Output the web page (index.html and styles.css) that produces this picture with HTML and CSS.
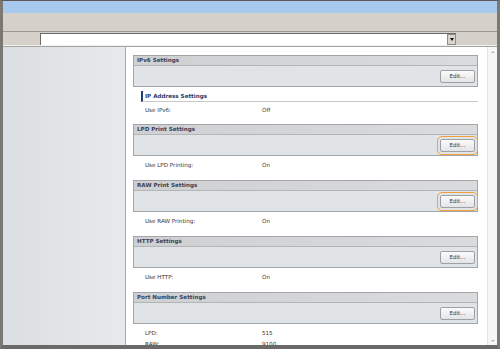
FILE: index.html
```html
<!DOCTYPE html>
<html lang="en">
<head>
<meta charset="UTF-8" />
<title>Remote UI - Network Settings</title>
<link rel="stylesheet" href="styles.css">
</head>
<body>
<div class="window">
  <div class="titlebar"></div>
  <div class="toolbar"></div>
  <div class="addressbar">
    <div class="address"><span class="drop"></span></div>
  </div>
  <div class="main">
    <div class="nav"></div>
    <div class="content">
      <div class="pane">

        <div class="section">
          <div class="section-head">IPv6 Settings</div>
          <div class="section-body"><button class="edit">Edit...</button></div>
        </div>
        <div class="subhead">IP Address Settings</div>
        <div class="row first">
          <span class="label">Use IPv6:</span>
          <span class="value">Off</span>
        </div>

        <div class="section">
          <div class="section-head">LPD Print Settings</div>
          <div class="section-body"><button class="edit focus">Edit...</button></div>
        </div>
        <div class="row">
          <span class="label">Use LPD Printing:</span>
          <span class="value">On</span>
        </div>

        <div class="section">
          <div class="section-head">RAW Print Settings</div>
          <div class="section-body"><button class="edit focus">Edit...</button></div>
        </div>
        <div class="row">
          <span class="label">Use RAW Printing:</span>
          <span class="value">On</span>
        </div>

        <div class="section">
          <div class="section-head">HTTP Settings</div>
          <div class="section-body"><button class="edit">Edit...</button></div>
        </div>
        <div class="row">
          <span class="label">Use HTTP:</span>
          <span class="value">On</span>
        </div>

        <div class="section">
          <div class="section-head">Port Number Settings</div>
          <div class="section-body"><button class="edit">Edit...</button></div>
        </div>
        <div class="rows">
          <div class="kv"><span class="label">LPD:</span><span class="value">515</span></div>
          <div class="kv"><span class="label">RAW:</span><span class="value">9100</span></div>
        </div>

      </div>
      <div class="scrollbar">
        <span class="arrow up"></span>
        <span class="arrow down"></span>
      </div>
    </div>
  </div>
</div>
</body>
</html>
```

FILE: styles.css
```css
/* Reset */
* {
  box-sizing: border-box;
}
body {
  margin: 0;
  width: 500px;
  height: 349px;
  overflow: hidden;
  background: #ffffff;
  font-family: "DejaVu Sans", Verdana, sans-serif;
  color: #333;
}
.window {
  width: 500px;
  height: 349px;
  display: flex;
  flex-direction: column;
  border-top: 1px solid #5c5955;
  border-left: 3px solid #7b7874;
  border-right: 3px solid #7b7874;
  border-bottom: 4px solid #6c6a68;
}
.titlebar {
  height: 12px;
  background: #a7c9ee;
}
.toolbar {
  height: 19px;
  background: #d5d1ca;
  border-bottom: 1px solid #9c9891;
}
.addressbar {
  height: 14px;
  background: #d5d1ca;
  border-bottom: 1px solid #f2f1ee;
  padding-top: 1px;
}
.address {
  margin-left: 37px;
  width: 416px;
  height: 12px;
  background: #ffffff;
  border-left: 1px solid #6b6b6b;
  border-top: 1px solid #6b6b6b;
  display: flex;
  justify-content: flex-end;
}
.drop {
  width: 9px;
  height: 11px;
  background: #d8d5ce;
  border: 1px solid #8a8a8a;
  display: flex;
  align-items: center;
  justify-content: center;
}
.drop::after {
  content: "";
  border-left: 2.5px solid transparent;
  border-right: 2.5px solid transparent;
  border-top: 3px solid #111;
}
.main {
  flex: 1;
  display: flex;
  overflow: hidden;
  border-top: 1px solid #a4a4a4;
}
.nav {
  width: 123px;
  background: linear-gradient(to right, #dcdfe2, #e7e9eb);
  border-right: 1px solid #aaaaaa;
}
.content {
  flex: 1;
  display: flex;
  background: #ffffff;
  overflow: hidden;
}
.pane {
  flex: 1;
  padding: 8px 9px 0 7px;
  overflow: hidden;
}
.scrollbar {
  width: 10px;
  background: #f6f6f6;
  border-left: 1px solid #e4e4e4;
  display: flex;
  flex-direction: column;
  justify-content: space-between;
  align-items: center;
  padding: 4px 0 3px;
}
.arrow {
  width: 0;
  height: 0;
  border-left: 2px solid transparent;
  border-right: 2px solid transparent;
}
.arrow.up {
  border-bottom: 2px solid #b5b5b5;
}
.arrow.down {
  border-top: 2px solid #b5b5b5;
}
.section {
  border: 1px solid #a2a6aa;
}
.section-head {
  height: 10px;
  line-height: 9px;
  padding-left: 3px;
  background: linear-gradient(to right, #cfd0d1, #dadbdc);
  border-bottom: 1px solid #b3b5b7;
  font-size: 5.6px;
  font-weight: 700;
  color: #39425a;
}
.section-body {
  height: 20px;
  background: #e1e4e7;
  display: flex;
  align-items: center;
  justify-content: flex-end;
  padding-right: 2px;
}
.edit {
  width: 35px;
  height: 13px;
  padding: 0;
  border: 1px solid #9da1a5;
  border-radius: 2px;
  background: linear-gradient(#fbfbfb, #e3e4e5);
  font-family: "DejaVu Sans", Verdana, sans-serif;
  font-size: 5.6px;
  color: #2f3440;
}
.edit.focus {
  outline: 1.5px solid #f2a13a;
  outline-offset: 2px;
}
.subhead {
  margin: 4px 0 0 8px;
  height: 11px;
  line-height: 10px;
  padding-left: 2px;
  border-left: 2px solid #1f3d6e;
  border-bottom: 1px solid #c6c8ca;
  font-size: 5.6px;
  font-weight: 700;
  color: #2b3b68;
}
.row {
  display: flex;
  padding: 3px 0 8px 12px;
  line-height: 13px;
  font-size: 5.6px;
}
.row.first {
  padding-top: 2px;
  padding-bottom: 7px;
}
.label {
  width: 117px;
}
.rows {
  padding: 4px 0 0 12px;
  font-size: 5.6px;
}
.kv {
  display: flex;
  line-height: 11px;
}
```
